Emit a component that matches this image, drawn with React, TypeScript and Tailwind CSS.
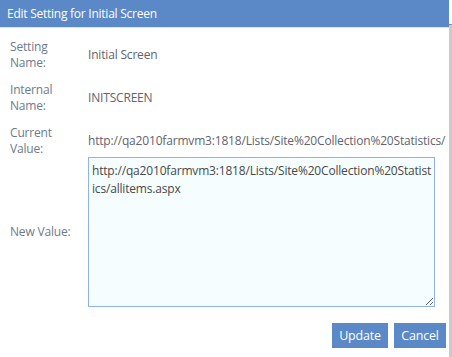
export default function App() {
  const font = { fontFamily: '"Open Sans", "Noto Sans", sans-serif' };
  const value = "http://qa2010farmvm3:1818/Lists/Site%20Collection%20Statistics/allitems.aspx";

  return (
    <div className="flex h-[357px] w-[452px] bg-white" style={font}>
      <div className="flex w-[449px] flex-col">
        {/* title bar */}
        <div className="flex h-[27px] items-center bg-[#5b88c6] pl-[7px] text-[12px] tracking-[-0.25px] text-white">
          Edit Setting for Initial Screen
        </div>
        <div className="h-px bg-[#e3e3e3]" />

        <div className="flex flex-col pl-[10px] pr-[3px] text-[12px] leading-[16px] tracking-[-0.18px]">
          <div className="mt-[11px] flex items-center">
            <div className="w-[78px] text-[#6d7a8d]">Setting<br />Name:</div>
            <div className="text-[#62636f]">Initial Screen</div>
          </div>
          <div className="mt-[11px] flex items-center">
            <div className="w-[78px] text-[#6d7a8d]">Internal<br />Name:</div>
            <div className="text-[#62636f]">INITSCREEN</div>
          </div>
          <div className="mt-[11px] flex items-center">
            <div className="w-[78px] text-[#6d7a8d]">Current<br />Value:</div>
            <div className="whitespace-nowrap text-[#62636f]">
              http://qa2010farmvm3:1818/Lists/Site%20Collection%20Statistics/
            </div>
          </div>
          <div className="flex items-center">
            <div className="w-[78px] text-[#6d7a8d]">New Value:</div>
            <textarea
              defaultValue={value}
              spellCheck={false}
              className="h-[150px] w-[347px] border border-[#8db2ee] bg-[#f5fdff] pt-[4px] pr-[2.5px] pl-[3px] text-[12px] leading-[18px] tracking-[-0.18px] text-[#484848] outline-none"
              style={font}
            />
          </div>
          <div className="mt-[16px] flex justify-end gap-[6px]">
            <button className="h-[25px] w-[56px] bg-[#5b88c6] text-[12.5px] tracking-[-0.2px] text-white">
              Update
            </button>
            <button className="h-[25px] w-[52px] bg-[#5b88c6] text-[12.5px] tracking-[-0.2px] text-white">
              Cancel
            </button>
          </div>
        </div>
      </div>
      <div className="flex w-[3px] flex-col pt-[24px]">
        <div className="h-px bg-[#8a8a8a]" />
        <div className="flex-1 bg-[#cbcbcb]" />
      </div>
    </div>
  );
}
